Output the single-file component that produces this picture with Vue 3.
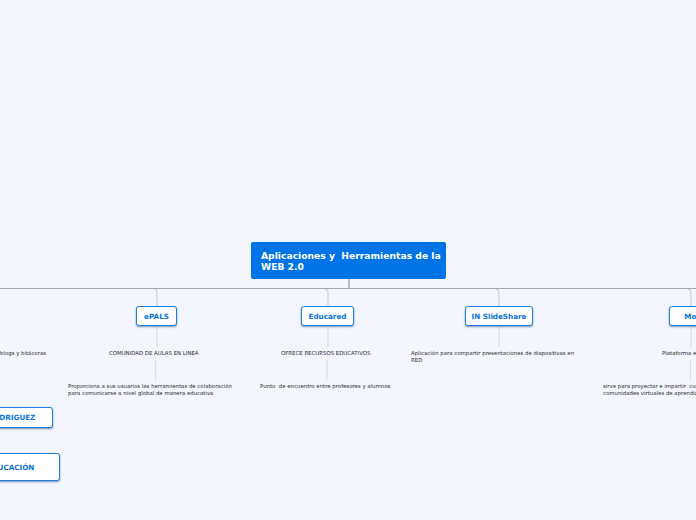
<template>
  <div class="map">
    <svg class="links" width="696" height="520" viewBox="0 0 696 520" fill="none">
      <path d="M0 288.5H696" stroke="#a8a8a8" stroke-width="1" />
      <path d="M349 279V288" stroke="#a8a8a8" stroke-width="1.5" />
      <path v-for="b in branches" :key="b" :d="`M${b} 306V292q0-3-3-3`" stroke="#c4c6cc" stroke-width="1" />
      <path v-for="(s, i) in stems" :key="i" :d="s" stroke="#dcdee4" stroke-width="1.2" />
    </svg>

    <div class="node root">Aplicaciones y&nbsp; Herramientas de la<br />WEB 2.0</div>
    <div
      v-for="n in nodes"
      :key="n.text"
      class="node sub"
      :style="{ left: n.x + 'px', top: n.y + 'px', width: n.w + 'px', height: n.h + 'px' }"
    >{{ n.text }}</div>
    <div
      v-for="t in texts"
      :key="t.text"
      class="note"
      :style="{ left: t.x + 'px', top: t.y + 'px' }"
    >{{ t.text }}</div>
  </div>
</template>

<script setup>
const branches = [157, 328, 499, 691]
const stems = [
  'M157 326V347',
  'M155.5 360V380',
  'M328 326V347',
  'M327 360V380',
  'M499 326V347',
  'M691 326V347',
  'M690.5 360V380'
]
const nodes = [
  { text: 'ePALS', x: 136, y: 306, w: 41, h: 20 },
  { text: 'Educared', x: 301, y: 306, w: 53, h: 20 },
  { text: 'IN SlideShare', x: 465, y: 306, w: 68, h: 20 },
  { text: 'Moodle', x: 669, y: 306, w: 60, h: 20 },
  { text: 'RODRIGUEZ', x: -30, y: 407, w: 83, h: 21 },
  { text: 'EDUCACIÓN', x: -39, y: 453, w: 99, h: 28 }
]
const texts = [
  { text: 'blogs y bitácoras', x: 0, y: 350 },
  { text: 'COMUNIDAD DE AULAS EN LINEA', x: 109, y: 350 },
  { text: 'Proporciona a sus usuarios las herramientas de colaboración\npara comunicarse a nivel global de manera educativa', x: 68, y: 383 },
  { text: 'OFRECE RECURSOS EDUCATIVOS', x: 281, y: 350 },
  { text: 'Punto  de encuentro entre profesores y alumnos', x: 260, y: 383 },
  { text: 'Aplicación para compartir presentaciones de diapositivas en\nRED', x: 411, y: 350 },
  { text: 'Plataforma educativa', x: 662, y: 350 },
  { text: 'sirve para proyectar e impartir  cursos en\ncomunidades virtuales de aprendizaje', x: 603, y: 383 }
]
</script>

<style>
html, body { margin: 0; background: #f3f6ff; }
</style>

<style scoped>
.map {
  position: relative;
  width: 696px;
  height: 520px;
  overflow: hidden;
  background: #f3f6ff;
  font-family: "DejaVu Sans", sans-serif;
}
.links { position: absolute; left: 0; top: 0; }
.node { position: absolute; box-sizing: border-box; font-weight: 700; }
.root {
  left: 251px;
  top: 242px;
  width: 195px;
  height: 37px;
  padding: 8px 10px;
  border-radius: 2px;
  background: #0073e6;
  color: #fff;
  font-size: 9.2px;
  line-height: 11px;
  white-space: nowrap;
}
.sub {
  display: flex;
  align-items: center;
  justify-content: center;
  border: 1.5px solid #1f7fe0;
  border-radius: 3px;
  background: #fff;
  color: #0b73dc;
  font-size: 7.2px;
  white-space: nowrap;
  box-shadow: 0 1px 2px rgba(20, 60, 110, .55);
}
.note {
  position: absolute;
  font-size: 5.4px;
  line-height: 7px;
  color: #2a2a33;
  white-space: pre;
}
</style>
